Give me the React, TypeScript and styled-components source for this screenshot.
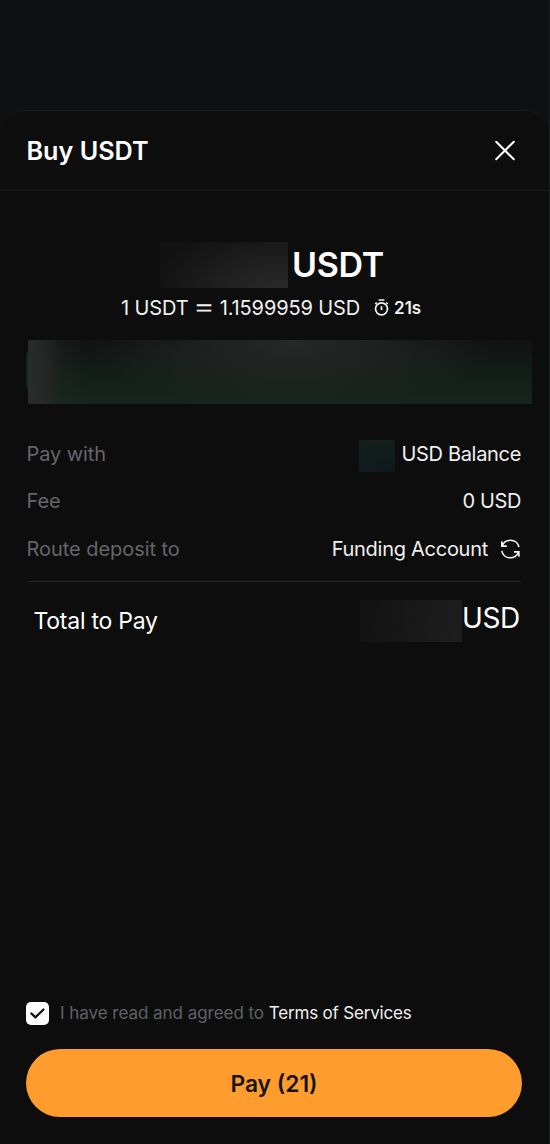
import React from 'react';
import styled, { createGlobalStyle } from 'styled-components';

const Global = createGlobalStyle`
  * { box-sizing: border-box; }
  body { margin: 0; background: #0d0d0d; font-family: Inter, "Liberation Sans", sans-serif; }
`;

const Screen = styled.div`
  height: 1144px;
  padding-top: 110px;
  background: #0e1012;
  border-right: 1px solid #1c1d1e;
  overflow: hidden;
`;

const Sheet = styled.main`
  height: 1034px;
  display: flex;
  flex-direction: column;
  background: #0d0d0d;
  border-top: 1px solid #191a1b;
  border-radius: 24px 24px 0 0;
`;

const Header = styled.header`
  height: 80px;
  flex: none;
  display: flex;
  align-items: center;
  justify-content: space-between;
  padding: 0 34px 0 26.5px;
  border-bottom: 1px solid #1a1b1c;
`;

const Text = styled.span<{ $size: number; $weight?: number; $color?: string; $spacing?: number }>`
  font-size: ${p => p.$size}px;
  font-weight: ${p => p.$weight ?? 400};
  color: ${p => p.$color ?? '#f0f0f0'};
  letter-spacing: ${p => p.$spacing ?? 0}px;
  line-height: 1.2;
  white-space: pre;
`;

const Title = styled(Text)`
  padding-top: 2px;
`;

const CloseButton = styled.button`
  display: flex;
  padding: 0;
  border: 0;
  background: none;
`;

const Amount = styled.section`
  display: flex;
  height: 46px;
  margin: 51px 0 0 160px;
  align-items: center;
  gap: 4px;
`;

const Mask = styled.span<{ $w: number; $h: number; $fill: string }>`
  flex: none;
  width: ${p => p.$w}px;
  height: ${p => p.$h}px;
  background: ${p => p.$fill};
`;

const Rate = styled.div`
  display: flex;
  align-items: center;
  height: 24px;
  margin: 8px 0 0 121px;
`;

const EqualsSign = styled.span`
  width: 31px;
  display: flex;
  justify-content: center;
  padding-bottom: 4px;
  color: #f0f0f0;
  font-size: 28px;
  font-weight: 300;
  line-height: 20px;
`;

const Timer = styled.span`
  display: flex;
  align-items: center;
  gap: 5px;
  margin-left: 14px;
`;

const Banner = styled.div`
  position: relative;
  flex: none;
  height: 64px;
  margin: 20px 17px 0 28px;
  background:
    linear-gradient(90deg, #2a2b2b 0, rgba(40, 42, 41, 0.85) 14px, rgba(36, 38, 37, 0.35) 34px, rgba(36, 38, 37, 0) 60px),
    radial-gradient(205px 72px at 265px 0, rgba(43, 43, 43, 0.85), rgba(39, 40, 39, 0.6) 45%, rgba(36, 38, 37, 0)),
    linear-gradient(180deg, #101212 0, #121c17 45%, #15251d 100%);
  &::before {
    content: '';
    position: absolute;
    left: -2px;
    top: 12px;
    width: 2px;
    height: 36px;
    border-radius: 2px 0 0 2px;
    background: #0c271d;
  }
`;

const Details = styled.section`
  display: flex;
  flex-direction: column;
  margin: 26px 28px 0 26.5px;
  padding-bottom: 8px;
  border-bottom: 1px solid #242528;
`;

const Row = styled.div`
  display: flex;
  align-items: center;
  justify-content: space-between;
  height: 47.5px;
`;

const Value = styled.div<{ $gap: number }>`
  display: flex;
  align-items: center;
  gap: ${p => p.$gap}px;
`;

const BalanceMask = styled(Mask)`
  margin: 4px 0 0;
`;

const Total = styled.section`
  display: flex;
  align-items: center;
  justify-content: space-between;
  height: 42px;
  margin: 18px 29px 0 33.5px;
`;

const TotalLabel = styled(Text)`
  padding-top: 2px;
`;

const TotalCurrency = styled(Text)`
  padding-bottom: 3px;
`;

const Footer = styled.footer`
  margin: auto 27.4px 27px 26.4px;
`;

const Agreement = styled.label`
  display: flex;
  align-items: center;
  height: 24px;
  margin-bottom: 24px;
`;

const Checkbox = styled.span`
  display: flex;
  align-items: center;
  justify-content: center;
  width: 23px;
  height: 23px;
  margin-right: 10.6px;
  border-radius: 5px;
  background: #fff;
`;

const PayButton = styled.button`
  display: flex;
  align-items: center;
  justify-content: center;
  width: 100%;
  height: 68px;
  padding: 2px 0 0;
  border: 0;
  border-radius: 34px;
  background: #ff9c2e;
  font-family: inherit;
`;

const muted = '#65666a';

export default function App() {
  return (
    <>
      <Global />
      <Screen>
        <Sheet>
          <Header>
            <Title $size={25.2} $weight={600} $color="#fff">Buy USDT</Title>
            <CloseButton aria-label="Close">
              <svg width="20" height="20" viewBox="0 0 20 20" fill="none" stroke="#fff" strokeWidth="2" strokeLinecap="round">
                <path d="M1.2 .7 18.8 18.3M18.8 .7 1.2 18.3" />
              </svg>
            </CloseButton>
          </Header>
          <Amount>
            <Mask $w={128} $h={46} $fill="radial-gradient(125px 65px at 92% 105%, #2a2a2a, #121212)" />
            <Text $size={34} $weight={600} $color="#fff" $spacing={-0.3}>USDT</Text>
          </Amount>
          <Rate>
            <Text $size={20} $spacing={-0.1}>1 USDT</Text>
            <EqualsSign>＝</EqualsSign>
            <Text $size={20} $spacing={-0.12}>1.1599959 USD</Text>
            <Timer>
              <svg width="15" height="17" viewBox="0 0 15 17" fill="none" stroke="#f4f4f4" strokeWidth="1.7">
                <circle cx="7.5" cy="9.8" r="6" />
                <path d="M4.6 1h5.8M7.5 7.2v3.8M12.2 3.5l1.6 1.5M2.8 3.5 1.2 5" />
              </svg>
              <Text $size={17} $weight={600}>21s</Text>
            </Timer>
          </Rate>
          <Banner />
          <Details>
            <Row>
              <Text $size={20} $color={muted} $spacing={-0.1}>Pay with</Text>
              <Value $gap={6}>
                <BalanceMask $w={36} $h={32} $fill="linear-gradient(165deg, #12201b, #10181d)" />
                <Text $size={20} $spacing={-0.32}>USD Balance</Text>
              </Value>
            </Row>
            <Row>
              <Text $size={20} $color={muted} $spacing={-0.1}>Fee</Text>
              <Text $size={20} $spacing={-0.4}>0 USD</Text>
            </Row>
            <Row>
              <Text $size={20} $color={muted} $spacing={-0.05}>Route deposit to</Text>
              <Value $gap={12}>
                <Text $size={20} $spacing={-0.27}>Funding Account</Text>
                <svg width="21" height="20" viewBox="0 0 21 20" fill="none" stroke="#f4f4f4" strokeWidth="1.6">
                  <path d="M1.8 2.2v4.9h5M2.2 6.8C3.6 3.4 6.7 1.2 10.4 1.2c4.3 0 7.8 2.9 8.5 7M18.9 17.8v-4.9h-5M18.5 13.2c-1.4 3.4-4.5 5.6-8.2 5.6-4.3 0-7.8-2.9-8.5-7" />
                </svg>
              </Value>
            </Row>
          </Details>
          <Total>
            <TotalLabel $size={23} $color="#fff" $spacing={-0.25}>Total to Pay</TotalLabel>
            <Value $gap={0}>
              <Mask $w={102} $h={42} $fill="linear-gradient(100deg, #121212, #1e1e1e)" />
              <TotalCurrency $size={28} $color="#fff" $spacing={-0.3}>USD</TotalCurrency>
            </Value>
          </Total>
          <Footer>
            <Agreement>
              <Checkbox>
                <svg width="15" height="11" viewBox="0 0 15 11" fill="none" stroke="#101010" strokeWidth="2.2" strokeLinecap="round" strokeLinejoin="round">
                  <path d="M1.3 5.4 5.4 9.4 13.5 1.5" />
                </svg>
              </Checkbox>
              <Text $size={17} $color="#606166" $spacing={-0.04}>I have read and agreed to </Text>
              <Text $size={17} $spacing={-0.18}>Terms of Services</Text>
            </Agreement>
            <PayButton>
              <Text $size={22.8} $weight={600} $color="#151515">Pay (21)</Text>
            </PayButton>
          </Footer>
        </Sheet>
      </Screen>
    </>
  );
}
